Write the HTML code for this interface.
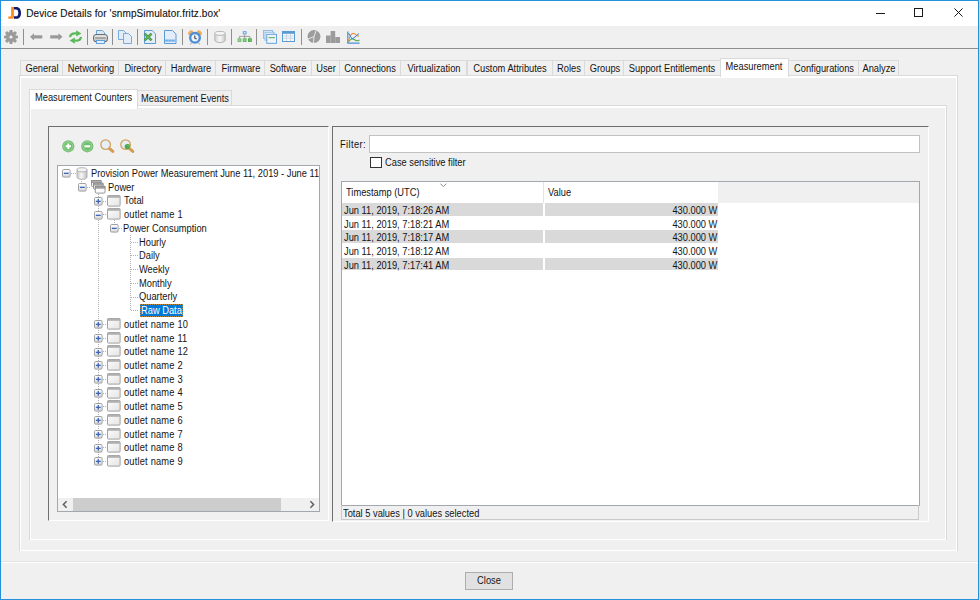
<!DOCTYPE html>
<html><head><meta charset="utf-8">
<style>
*{box-sizing:border-box;margin:0;padding:0}
html,body{width:979px;height:600px;overflow:hidden;background:#f0f0f0}
body{position:relative;font-family:"Liberation Sans",sans-serif;font-size:10px;color:#000}
.a{position:absolute}
svg.a{overflow:visible}
.t{position:absolute;white-space:nowrap;line-height:12px;-webkit-text-stroke:0px currentColor}
.ebox{position:absolute;width:9px;height:9px}
.hd{position:absolute;height:1px;background-image:linear-gradient(90deg,#b0b0b0 50%,transparent 50%);background-size:2px 1px}
.vd{position:absolute;width:1px;background-image:linear-gradient(#b0b0b0 50%,transparent 50%);background-size:1px 2px}
</style></head><body>

<div class="a" style="left:0.00px;top:0.00px;width:979.00px;height:600.00px;border:1px solid #2490dc;background:#f0f0f0"></div>
<div class="a" style="left:1.00px;top:1.00px;width:977.00px;height:25.40px;background:#fff"></div>
<svg class="a" style="left:7px;top:6px" width="15" height="14" viewBox="0 0 15 14"><path d="M4.1 1H6.9V10.2C6.9 11.9 6 12.8 4.2 12.8H1.3V10.4H3.2C3.8 10.4 4.1 10.1 4.1 9.5Z" fill="#ff8a1e"/><path d="M6.9 1H9.2C12.4 1 14 3.2 14 6.9S12.4 12.8 9.2 12.8H6.9V10.3H8.9C10.5 10.3 11.3 9.2 11.3 6.9S10.5 3.5 8.9 3.5H6.9Z" fill="#0d1b6e"/></svg>
<div class="t" style="left:26.20px;top:8.14px;font-size:10px;transform:scaleX(1.0);transform-origin:0 0;color:#111;letter-spacing:0.12px;-webkit-text-stroke:0.12px #111">Device Details for 'snmpSimulator.fritz.box'</div>
<div class="a" style="left:876.20px;top:13.00px;width:9.00px;height:1.00px;background:#1a1a1a"></div>
<div class="a" style="left:914.40px;top:8.30px;width:9.00px;height:9.00px;border:1px solid #1a1a1a"></div>
<svg class="a" style="left:954.2px;top:8.4px" width="9" height="9" viewBox="0 0 9 9"><path d="M0.4 0.4L8.6 8.6M8.6 0.4L0.4 8.6" stroke="#1a1a1a" stroke-width="1"/></svg>
<div class="a" style="left:1.00px;top:48.00px;width:977.00px;height:1.20px;background:#8d8d8d"></div>
<div class="a" style="left:22.80px;top:29.00px;width:1.10px;height:16.30px;background:#8f8f8f"></div>
<div class="a" style="left:87.30px;top:29.00px;width:1.10px;height:16.30px;background:#8f8f8f"></div>
<div class="a" style="left:112.00px;top:29.00px;width:1.10px;height:16.30px;background:#8f8f8f"></div>
<div class="a" style="left:136.90px;top:29.00px;width:1.10px;height:16.30px;background:#8f8f8f"></div>
<div class="a" style="left:181.80px;top:29.00px;width:1.10px;height:16.30px;background:#8f8f8f"></div>
<div class="a" style="left:206.50px;top:29.00px;width:1.10px;height:16.30px;background:#8f8f8f"></div>
<div class="a" style="left:231.30px;top:29.00px;width:1.10px;height:16.30px;background:#8f8f8f"></div>
<div class="a" style="left:256.00px;top:29.00px;width:1.10px;height:16.30px;background:#8f8f8f"></div>
<div class="a" style="left:300.80px;top:29.00px;width:1.10px;height:16.30px;background:#8f8f8f"></div>
<!-- gear -->
<svg class="a" style="left:4px;top:30px" width="14" height="14" viewBox="0 0 14 14"><g fill="#9a9a9a" transform="translate(7 7)"><circle r="5"/><rect x="-1.6" y="-7" width="3.2" height="3" rx=".8" transform="rotate(0)"/><rect x="-1.6" y="-7" width="3.2" height="3" rx=".8" transform="rotate(45)"/><rect x="-1.6" y="-7" width="3.2" height="3" rx=".8" transform="rotate(90)"/><rect x="-1.6" y="-7" width="3.2" height="3" rx=".8" transform="rotate(135)"/><rect x="-1.6" y="-7" width="3.2" height="3" rx=".8" transform="rotate(180)"/><rect x="-1.6" y="-7" width="3.2" height="3" rx=".8" transform="rotate(225)"/><rect x="-1.6" y="-7" width="3.2" height="3" rx=".8" transform="rotate(270)"/><rect x="-1.6" y="-7" width="3.2" height="3" rx=".8" transform="rotate(315)"/></g><circle cx="7" cy="7" r="1.6" fill="#f0f0f0"/></svg>
<!-- left arrow -->
<svg class="a" style="left:30px;top:33px" width="13" height="8" viewBox="0 0 13 8"><path d="M0 3.8L4 0.3V2.3H12.3V5.4H4V7.4Z" fill="#9a9a9a"/></svg>
<!-- right arrow -->
<svg class="a" style="left:49.5px;top:33px" width="13" height="8" viewBox="0 0 13 8"><path d="M12.5 3.8L8.5 0.3V2.3H0.2V5.4H8.5V7.4Z" fill="#9a9a9a"/></svg>
<!-- refresh -->
<svg class="a" style="left:68px;top:30px" width="15" height="14" viewBox="0 0 15 14"><g fill="none" stroke="#5cb85c" stroke-width="2.3"><path d="M2 7.2C2.3 4.5 4.5 3 8.6 3.4"/><path d="M13 6.8C12.7 9.5 10.5 11 6.4 10.6"/></g><path d="M8.2 0.3L13.4 3.6L8.2 6.6Z" fill="#5cb85c"/><path d="M6.8 7.4L1.6 10.4L6.8 13.7Z" fill="#5cb85c"/></svg>
<!-- printer -->
<svg class="a" style="left:93px;top:30px" width="15" height="14" viewBox="0 0 15 14"><defs><linearGradient id="prg" x1="0" y1="0" x2="0" y2="1"><stop offset="0" stop-color="#f2f2f2"/><stop offset="1" stop-color="#bdbdbd"/></linearGradient></defs><path d="M3.5 0.5H9.3L11.5 2.7V5.5H3.5Z" fill="#dce9f8" stroke="#5b9bd5" stroke-width=".9"/><rect x="0.6" y="4.6" width="13.8" height="7.2" rx="2.4" fill="url(#prg)" stroke="#5f5f5f" stroke-width="1"/><rect x="2.2" y="7.2" width="10.6" height="1.6" fill="#9a9a9a"/><rect x="3.5" y="10.5" width="8" height="3" fill="#e4eefa" stroke="#5b9bd5" stroke-width=".9"/></svg>
<!-- copy -->
<svg class="a" style="left:118px;top:30px" width="15" height="14" viewBox="0 0 15 14"><path d="M0.5 0.5H5.5L8 3V9.5H0.5Z" fill="#e2edf9" stroke="#6aa2dc" stroke-width=".9"/><path d="M5.5 3.5H10.5L13.5 6.5V13.5H5.5Z" fill="#e2edf9" stroke="#6aa2dc" stroke-width=".9"/></svg>
<!-- excel -->
<svg class="a" style="left:143px;top:30px" width="14" height="14" viewBox="0 0 14 14"><path d="M1.5 0.5H9.2L12.5 3.8V13.5H1.5Z" fill="#e4eefa" stroke="#5b9bd5" stroke-width="1"/><path d="M1.6 3.6L8.6 10.4M8.6 3.6L1.6 10.4" stroke="#4a9a40" stroke-width="2.6"/><path d="M2 4L8.2 10M8.2 4L2 10" stroke="#7cc06a" stroke-width=".8"/></svg>
<!-- doc -->
<svg class="a" style="left:163.5px;top:30px" width="14" height="14" viewBox="0 0 14 14"><path d="M0.5 0.5H8.4L12 4.1V13.5H0.5Z" fill="#e4eefa" stroke="#5b9bd5" stroke-width="1"/><rect x="1" y="9.4" width="10.5" height="2.4" fill="#86bff0"/><path d="M2.5 10.6H3.5M5.5 10.6H6.5M8.5 10.6H9.5" stroke="#5b9bd5" stroke-width="1"/></svg>
<!-- alarm clock -->
<svg class="a" style="left:187.5px;top:29.5px" width="14" height="15" viewBox="0 0 14 15"><ellipse cx="2.6" cy="2.8" rx="2.9" ry="2" transform="rotate(-42 2.6 2.8)" fill="#efab5a"/><ellipse cx="11.4" cy="2.8" rx="2.9" ry="2" transform="rotate(42 11.4 2.8)" fill="#efab5a"/><circle cx="7" cy="7.8" r="6" fill="#4a8fd6"/><circle cx="7" cy="7.8" r="3.6" fill="#eef4fb"/><path d="M6.8 5.6V8.2L8.6 9" fill="none" stroke="#3c3c3c" stroke-width="1.1"/><path d="M3.4 13L2.4 14.4M10.6 13L11.6 14.4" stroke="#9a9a9a" stroke-width="1"/></svg>
<!-- db -->
<svg class="a" style="left:213.8px;top:31px" width="12" height="12" viewBox="0 0 12 12"><defs><linearGradient id="tdb" x1="0" x2="1"><stop offset="0" stop-color="#cfcfcf"/><stop offset=".5" stop-color="#f8f8f8"/><stop offset="1" stop-color="#c8c8c8"/></linearGradient></defs><path d="M0.8 2.4V9.2C0.8 10.5 3.1 11.5 6 11.5S11.2 10.5 11.2 9.2V2.4" fill="url(#tdb)" stroke="#b0b0b0" stroke-width=".9"/><ellipse cx="6" cy="2.4" rx="5.2" ry="2" fill="#f4f4f4" stroke="#b0b0b0" stroke-width=".9"/></svg>
<!-- network -->
<svg class="a" style="left:236.5px;top:31px" width="15" height="12" viewBox="0 0 15 12"><rect x="5.8" y="0.2" width="3.8" height="3.2" fill="#5aa2ea"/><rect x="6.8" y="1" width="1.8" height="1.6" fill="#cfe4fa"/><path d="M7.7 3.4V5.4M2.4 5.4H12.9M2.4 5.4V7.3M7.7 5.4V7.3M12.9 5.4V7.3" stroke="#8a8a8a" stroke-width=".8" fill="none"/><rect x="0.6" y="7.3" width="3.8" height="3.6" fill="#6cbc6c"/><rect x="5.8" y="7.3" width="3.8" height="3.6" fill="#5cb25c"/><rect x="11" y="7.3" width="3.8" height="3.6" fill="#4aa54a"/><rect x="1.6" y="8.3" width="1.8" height="1.6" fill="#a4d8a4"/><rect x="6.8" y="8.3" width="1.8" height="1.6" fill="#94cf94"/><rect x="12" y="8.3" width="1.8" height="1.6" fill="#84c584"/></svg>
<!-- stack windows -->
<svg class="a" style="left:262.8px;top:30.3px" width="14" height="14" viewBox="0 0 14 14"><rect x="0.5" y="0.5" width="9" height="8" fill="#e8f0fa" stroke="#8db8e6" stroke-width=".9"/><rect x="2" y="2.2" width="9" height="8" fill="#e8f0fa" stroke="#8db8e6" stroke-width=".9"/><rect x="3.8" y="4.3" width="9.7" height="9" fill="#eef4fb" stroke="#5b9bd5" stroke-width=".9"/><rect x="5.5" y="7" width="6.5" height="1.2" fill="#67b867"/></svg>
<!-- table -->
<svg class="a" style="left:282px;top:31px" width="13" height="11" viewBox="0 0 13 11"><rect x="0.5" y="0.5" width="12" height="10" fill="#f4f7fb" stroke="#5b9bd5" stroke-width="1"/><rect x="0.5" y="0.5" width="12" height="2.3" fill="#5b9bd5"/><path d="M1.5 5H11.5M1.5 7.3H11.5M4.5 3V10M8.5 3V10" stroke="#c8d4e2" stroke-width=".9"/></svg>
<!-- pie -->
<svg class="a" style="left:306.5px;top:30px" width="14" height="13" viewBox="0 0 14 13"><circle cx="7" cy="6.5" r="6.5" fill="#9c9c9c"/><path d="M7 6.5L9.2 0.4M7 6.5L0.8 9.2M7 6.5L6.5 13" stroke="#f0f0f0" stroke-width=".9"/></svg>
<!-- bars -->
<svg class="a" style="left:326.3px;top:31px" width="14" height="12" viewBox="0 0 14 12"><rect x="0" y="4.5" width="4.6" height="7.5" fill="#9c9c9c"/><rect x="4.6" y="0" width="4.6" height="12" fill="#9c9c9c"/><rect x="9.2" y="6" width="4.8" height="6" fill="#9c9c9c"/></svg>
<!-- line chart -->
<svg class="a" style="left:347px;top:30.5px" width="13" height="13" viewBox="0 0 13 13"><path d="M0.8 0.5V12.2H12.6" fill="none" stroke="#4a8fd8" stroke-width="1.2"/><path d="M1.5 10C3 4 5 2 7 2.5S10 6 12 5" fill="none" stroke="#f0913a" stroke-width="1.1"/><path d="M1.5 11C4 7 6 7.5 8 9S11 10 12.5 9" fill="none" stroke="#5aac4a" stroke-width="1.1"/><path d="M1.5 2L5 8L8 6L12 2.5" fill="none" stroke="#3a7fd0" stroke-width="1"/></svg>

<div class="a" style="left:20.10px;top:60.20px;width:42.60px;height:15.50px;border:1px solid #dadada;border-bottom:none;background:#f0f0f0"></div>
<div class="t" style="left:-158.30px;width:400px;text-align:center;top:63.03px;font-size:10.0px;transform:scaleX(0.93);transform-origin:50% 0;color:#141414;">General</div>
<div class="a" style="left:61.70px;top:60.20px;width:57.60px;height:15.50px;border:1px solid #dadada;border-bottom:none;background:#f0f0f0"></div>
<div class="t" style="left:-109.20px;width:400px;text-align:center;top:63.03px;font-size:10.0px;transform:scaleX(0.93);transform-origin:50% 0;color:#141414;">Networking</div>
<div class="a" style="left:118.30px;top:60.20px;width:47.90px;height:15.50px;border:1px solid #dadada;border-bottom:none;background:#f0f0f0"></div>
<div class="t" style="left:-57.45px;width:400px;text-align:center;top:63.03px;font-size:10.0px;transform:scaleX(0.93);transform-origin:50% 0;color:#141414;">Directory</div>
<div class="a" style="left:165.20px;top:60.20px;width:51.00px;height:15.50px;border:1px solid #dadada;border-bottom:none;background:#f0f0f0"></div>
<div class="t" style="left:-9.00px;width:400px;text-align:center;top:63.03px;font-size:10.0px;transform:scaleX(0.93);transform-origin:50% 0;color:#141414;">Hardware</div>
<div class="a" style="left:215.20px;top:60.20px;width:50.10px;height:15.50px;border:1px solid #dadada;border-bottom:none;background:#f0f0f0"></div>
<div class="t" style="left:40.55px;width:400px;text-align:center;top:63.03px;font-size:10.0px;transform:scaleX(0.93);transform-origin:50% 0;color:#141414;">Firmware</div>
<div class="a" style="left:264.30px;top:60.20px;width:47.50px;height:15.50px;border:1px solid #dadada;border-bottom:none;background:#f0f0f0"></div>
<div class="t" style="left:88.35px;width:400px;text-align:center;top:63.03px;font-size:10.0px;transform:scaleX(0.93);transform-origin:50% 0;color:#141414;">Software</div>
<div class="a" style="left:310.80px;top:60.20px;width:29.10px;height:15.50px;border:1px solid #dadada;border-bottom:none;background:#f0f0f0"></div>
<div class="t" style="left:125.65px;width:400px;text-align:center;top:63.03px;font-size:10.0px;transform:scaleX(0.93);transform-origin:50% 0;color:#141414;">User</div>
<div class="a" style="left:338.90px;top:60.20px;width:62.30px;height:15.50px;border:1px solid #dadada;border-bottom:none;background:#f0f0f0"></div>
<div class="t" style="left:170.35px;width:400px;text-align:center;top:63.03px;font-size:10.0px;transform:scaleX(0.93);transform-origin:50% 0;color:#141414;">Connections</div>
<div class="a" style="left:400.20px;top:60.20px;width:67.30px;height:15.50px;border:1px solid #dadada;border-bottom:none;background:#f0f0f0"></div>
<div class="t" style="left:234.15px;width:400px;text-align:center;top:63.03px;font-size:10.0px;transform:scaleX(0.93);transform-origin:50% 0;color:#141414;">Virtualization</div>
<div class="a" style="left:466.50px;top:60.20px;width:86.80px;height:15.50px;border:1px solid #dadada;border-bottom:none;background:#f0f0f0"></div>
<div class="t" style="left:310.20px;width:400px;text-align:center;top:63.03px;font-size:10.0px;transform:scaleX(0.93);transform-origin:50% 0;color:#141414;">Custom Attributes</div>
<div class="a" style="left:552.30px;top:60.20px;width:32.90px;height:15.50px;border:1px solid #dadada;border-bottom:none;background:#f0f0f0"></div>
<div class="t" style="left:369.05px;width:400px;text-align:center;top:63.03px;font-size:10.0px;transform:scaleX(0.93);transform-origin:50% 0;color:#141414;">Roles</div>
<div class="a" style="left:584.20px;top:60.20px;width:40.10px;height:15.50px;border:1px solid #dadada;border-bottom:none;background:#f0f0f0"></div>
<div class="t" style="left:404.55px;width:400px;text-align:center;top:63.03px;font-size:10.0px;transform:scaleX(0.93);transform-origin:50% 0;color:#141414;">Groups</div>
<div class="a" style="left:623.30px;top:60.20px;width:97.60px;height:15.50px;border:1px solid #dadada;border-bottom:none;background:#f0f0f0"></div>
<div class="t" style="left:472.40px;width:400px;text-align:center;top:63.03px;font-size:10.0px;transform:scaleX(0.93);transform-origin:50% 0;color:#141414;">Support Entitlements</div>
<div class="a" style="left:787.80px;top:60.20px;width:71.50px;height:15.50px;border:1px solid #dadada;border-bottom:none;background:#f0f0f0"></div>
<div class="t" style="left:623.85px;width:400px;text-align:center;top:63.03px;font-size:10.0px;transform:scaleX(0.93);transform-origin:50% 0;color:#141414;">Configurations</div>
<div class="a" style="left:858.30px;top:60.20px;width:40.60px;height:15.50px;border:1px solid #dadada;border-bottom:none;background:#f0f0f0"></div>
<div class="t" style="left:678.90px;width:400px;text-align:center;top:63.03px;font-size:10.0px;transform:scaleX(0.93);transform-origin:50% 0;color:#141414;">Analyze</div>
<div class="a" style="left:19.30px;top:75.20px;width:939.00px;height:476.30px;border:1px solid #dadada"></div>
<div class="a" style="left:20.30px;top:76.00px;width:937.00px;height:474.50px;border:1px solid #fff;border-top-width:2px"></div>
<div class="a" style="left:720.10px;top:58.40px;width:68.70px;height:18.80px;border:1px solid #dadada;border-bottom:none;background:#fff"></div>
<div class="t" style="left:554.20px;width:400px;text-align:center;top:60.93px;font-size:10.0px;transform:scaleX(0.93);transform-origin:50% 0;color:#141414;">Measurement</div>
<div class="a" style="left:137.00px;top:90.00px;width:94.80px;height:15.60px;border:1px solid #dadada;border-bottom:none;background:#f0f0f0"></div>
<div class="t" style="left:-14.80px;width:400px;text-align:center;top:92.73px;font-size:10.0px;transform:scaleX(0.93);transform-origin:50% 0;color:#141414;">Measurement Events</div>
<div class="a" style="left:29.00px;top:105.00px;width:918.00px;height:435.40px;border:1px solid #dadada"></div>
<div class="a" style="left:30.00px;top:106.30px;width:916.00px;height:433.60px;border:1px solid #fff;border-top-width:2px"></div>
<div class="a" style="left:29.00px;top:88.60px;width:108.80px;height:20.00px;border:1px solid #dadada;border-bottom:none;background:#fff"></div>
<div class="t" style="left:35.30px;top:91.53px;font-size:10.0px;transform:scaleX(0.93);transform-origin:0 0;color:#141414;">Measurement Counters</div>
<div class="a" style="left:48.20px;top:126.20px;width:281.00px;height:395.30px;border-top:1.3px solid #6e6e6e;border-left:1.3px solid #6e6e6e;border-right:1px solid #fff;border-bottom:1px solid #fff"></div>
<div class="a" style="left:331.90px;top:126.20px;width:597.30px;height:395.60px;border-top:1.3px solid #6e6e6e;border-left:1.3px solid #6e6e6e;border-right:1px solid #fff;border-bottom:1px solid #fff"></div>
<svg class="a" style="left:61.5px;top:139.5px" width="13" height="13" viewBox="0 0 13 13"><circle cx="6.3" cy="6.3" r="6.1" fill="#72bf72"/><circle cx="6.3" cy="6.3" r="4.6" fill="none" stroke="#a6dba6" stroke-width=".7"/><path d="M6.3 3.6V9M3.6 6.3H9" stroke="#fff" stroke-width="2"/></svg>
<svg class="a" style="left:81px;top:139.5px" width="13" height="13" viewBox="0 0 13 13"><circle cx="6.3" cy="6.3" r="6.1" fill="#72bf72"/><circle cx="6.3" cy="6.3" r="4.6" fill="none" stroke="#a6dba6" stroke-width=".7"/><path d="M3.4 6.3H9.2" stroke="#fff" stroke-width="2"/></svg>
<svg class="a" style="left:100px;top:139px" width="15" height="14" viewBox="0 0 15 14"><path d="M8.6 8.8L12.8 12.4" stroke="#d39c4e" stroke-width="3" stroke-linecap="round"/><circle cx="5.6" cy="5.6" r="4.8" fill="#e6eef8" stroke="#d4a35c" stroke-width="1.3"/></svg>
<svg class="a" style="left:119.8px;top:139px" width="15" height="14" viewBox="0 0 15 14"><path d="M8.6 8.8L12.8 12.4" stroke="#d39c4e" stroke-width="3" stroke-linecap="round"/><circle cx="5.6" cy="5.6" r="4.8" fill="#e6eef8" stroke="#d4a35c" stroke-width="1.3"/><circle cx="7.3" cy="7.6" r="2.7" fill="#4ea84e"/><circle cx="8.6" cy="6.6" r="1.5" fill="#5cb85c"/></svg>

<div class="a" style="left:57.40px;top:165.30px;width:262.30px;height:347.00px;border:1px solid #a3a8b0;background:#fff"></div>
<div class="a" style="left:58.4px;top:166.3px;width:260.3px;height:331.7px;overflow:hidden"><div class="a" style="left:-58.4px;top:-166.3px;width:979px;height:600px">
<div class="vd" style="left:81.30px;top:179.00px;height:4.50px"></div>
<div class="vd" style="left:97.50px;top:193.50px;height:268.09px"></div>
<div class="vd" style="left:114.10px;top:219.50px;height:4.96px"></div>
<div class="vd" style="left:130.10px;top:234.96px;height:75.78px"></div>
<div class="hd" style="left:70.50px;top:173.10px;width:5.50px"></div>
<svg class="ebox" style="left:61.50px;top:169.40px" width="9" height="9" viewBox="0 0 9 9"><defs><linearGradient id="eg" x1="0" y1="0" x2="0" y2="1"><stop offset="0" stop-color="#ffffff"/><stop offset="1" stop-color="#d8d8d8"/></linearGradient></defs><rect x="0.5" y="0.5" width="7.6" height="7.6" rx="1.1" fill="url(#eg)" stroke="#a0a0a0" stroke-width="1"/><rect x="1.9" y="3.7" width="4.8" height="1.3" fill="#3d66b8"/></svg>
<svg class="a" style="left:75.6px;top:167.20px" width="12" height="13" viewBox="0 0 12 13"><defs><linearGradient id="dbg" x1="0" x2="1"><stop offset="0" stop-color="#c9c9c9"/><stop offset=".45" stop-color="#f7f7f7"/><stop offset="1" stop-color="#bdbdbd"/></linearGradient></defs><path d="M1 2.8v7.4c0 1.2 2.2 2.1 5 2.1s5-.9 5-2.1V2.8" fill="url(#dbg)" stroke="#acacac" stroke-width=".9"/><ellipse cx="6" cy="2.8" rx="5" ry="2.1" fill="#f2f2f2" stroke="#acacac" stroke-width=".9"/></svg>
<div class="t" style="left:91.30px;top:167.94px;font-size:10.0px;transform:scaleX(0.93);transform-origin:0 0;color:#141414;">Provision Power Measurement June 11, 2019 - June 11, 2019</div>
<div class="hd" style="left:86.50px;top:186.81px;width:4.50px"></div>
<svg class="ebox" style="left:77.80px;top:183.11px" width="9" height="9" viewBox="0 0 9 9"><defs><linearGradient id="eg" x1="0" y1="0" x2="0" y2="1"><stop offset="0" stop-color="#ffffff"/><stop offset="1" stop-color="#d8d8d8"/></linearGradient></defs><rect x="0.5" y="0.5" width="7.6" height="7.6" rx="1.1" fill="url(#eg)" stroke="#a0a0a0" stroke-width="1"/><rect x="1.9" y="3.7" width="4.8" height="1.3" fill="#3d66b8"/></svg>
<svg class="a" style="left:90.6px;top:180.31px" width="15" height="14" viewBox="0 0 15 14"><g stroke="#8d8d8d" stroke-width=".9"><rect x="0.5" y="0.5" width="9.5" height="6" rx="1" fill="#f0f0f0"/><rect x="0.5" y="0.5" width="9.5" height="1.8" fill="#b5b5b5"/><rect x="2.5" y="3.2" width="9.5" height="6" rx="1" fill="#f3f3f3"/><rect x="2.5" y="3.2" width="9.5" height="1.8" fill="#b5b5b5"/><rect x="4.3" y="6.3" width="9.7" height="6.8" rx="1" fill="#fbfbfb"/><rect x="4.3" y="6.3" width="9.7" height="1.8" fill="#aaaaaa"/></g></svg>
<div class="t" style="left:107.50px;top:181.65px;font-size:10.0px;transform:scaleX(0.93);transform-origin:0 0;color:#141414;">Power</div>
<div class="hd" style="left:102.50px;top:200.53px;width:4.50px"></div>
<svg class="ebox" style="left:93.70px;top:196.83px" width="9" height="9" viewBox="0 0 9 9"><defs><linearGradient id="eg" x1="0" y1="0" x2="0" y2="1"><stop offset="0" stop-color="#ffffff"/><stop offset="1" stop-color="#d8d8d8"/></linearGradient></defs><rect x="0.5" y="0.5" width="7.6" height="7.6" rx="1.1" fill="url(#eg)" stroke="#a0a0a0" stroke-width="1"/><rect x="1.9" y="3.7" width="4.8" height="1.3" fill="#3d66b8"/><rect x="3.65" y="1.9" width="1.3" height="4.8" fill="#3d66b8"/></svg>
<svg class="a" style="left:106.60px;top:194.53px" width="14" height="12" viewBox="0 0 14 12"><defs><linearGradient id="wg" x1="0" y1="0" x2="1" y2="1"><stop offset="0" stop-color="#fdfdfd"/><stop offset="1" stop-color="#e4e4e4"/></linearGradient></defs><rect x="0.5" y="0.5" width="12.6" height="10.6" rx="1" fill="url(#wg)" stroke="#a0a0a0"/><rect x="0.5" y="0.5" width="12.6" height="2.3" fill="#b0b0b0"/></svg>
<div class="t" style="left:123.90px;top:195.36px;font-size:10.0px;transform:scaleX(0.93);transform-origin:0 0;color:#141414;">Total</div>
<div class="hd" style="left:102.50px;top:214.24px;width:4.50px"></div>
<svg class="ebox" style="left:93.70px;top:210.54px" width="9" height="9" viewBox="0 0 9 9"><defs><linearGradient id="eg" x1="0" y1="0" x2="0" y2="1"><stop offset="0" stop-color="#ffffff"/><stop offset="1" stop-color="#d8d8d8"/></linearGradient></defs><rect x="0.5" y="0.5" width="7.6" height="7.6" rx="1.1" fill="url(#eg)" stroke="#a0a0a0" stroke-width="1"/><rect x="1.9" y="3.7" width="4.8" height="1.3" fill="#3d66b8"/></svg>
<svg class="a" style="left:106.60px;top:208.24px" width="14" height="12" viewBox="0 0 14 12"><defs><linearGradient id="wg" x1="0" y1="0" x2="1" y2="1"><stop offset="0" stop-color="#fdfdfd"/><stop offset="1" stop-color="#e4e4e4"/></linearGradient></defs><rect x="0.5" y="0.5" width="12.6" height="10.6" rx="1" fill="url(#wg)" stroke="#a0a0a0"/><rect x="0.5" y="0.5" width="12.6" height="2.3" fill="#b0b0b0"/></svg>
<div class="t" style="left:123.90px;top:209.08px;font-size:10.0px;transform:scaleX(0.93);transform-origin:0 0;color:#141414;letter-spacing:0.2px">outlet name 1</div>
<div class="hd" style="left:102.50px;top:323.95px;width:4.50px"></div>
<svg class="ebox" style="left:93.70px;top:320.25px" width="9" height="9" viewBox="0 0 9 9"><defs><linearGradient id="eg" x1="0" y1="0" x2="0" y2="1"><stop offset="0" stop-color="#ffffff"/><stop offset="1" stop-color="#d8d8d8"/></linearGradient></defs><rect x="0.5" y="0.5" width="7.6" height="7.6" rx="1.1" fill="url(#eg)" stroke="#a0a0a0" stroke-width="1"/><rect x="1.9" y="3.7" width="4.8" height="1.3" fill="#3d66b8"/><rect x="3.65" y="1.9" width="1.3" height="4.8" fill="#3d66b8"/></svg>
<svg class="a" style="left:106.60px;top:317.95px" width="14" height="12" viewBox="0 0 14 12"><defs><linearGradient id="wg" x1="0" y1="0" x2="1" y2="1"><stop offset="0" stop-color="#fdfdfd"/><stop offset="1" stop-color="#e4e4e4"/></linearGradient></defs><rect x="0.5" y="0.5" width="12.6" height="10.6" rx="1" fill="url(#wg)" stroke="#a0a0a0"/><rect x="0.5" y="0.5" width="12.6" height="2.3" fill="#b0b0b0"/></svg>
<div class="t" style="left:123.90px;top:318.79px;font-size:10.0px;transform:scaleX(0.93);transform-origin:0 0;color:#141414;letter-spacing:0.2px">outlet name 10</div>
<div class="hd" style="left:102.50px;top:337.67px;width:4.50px"></div>
<svg class="ebox" style="left:93.70px;top:333.97px" width="9" height="9" viewBox="0 0 9 9"><defs><linearGradient id="eg" x1="0" y1="0" x2="0" y2="1"><stop offset="0" stop-color="#ffffff"/><stop offset="1" stop-color="#d8d8d8"/></linearGradient></defs><rect x="0.5" y="0.5" width="7.6" height="7.6" rx="1.1" fill="url(#eg)" stroke="#a0a0a0" stroke-width="1"/><rect x="1.9" y="3.7" width="4.8" height="1.3" fill="#3d66b8"/><rect x="3.65" y="1.9" width="1.3" height="4.8" fill="#3d66b8"/></svg>
<svg class="a" style="left:106.60px;top:331.67px" width="14" height="12" viewBox="0 0 14 12"><defs><linearGradient id="wg" x1="0" y1="0" x2="1" y2="1"><stop offset="0" stop-color="#fdfdfd"/><stop offset="1" stop-color="#e4e4e4"/></linearGradient></defs><rect x="0.5" y="0.5" width="12.6" height="10.6" rx="1" fill="url(#wg)" stroke="#a0a0a0"/><rect x="0.5" y="0.5" width="12.6" height="2.3" fill="#b0b0b0"/></svg>
<div class="t" style="left:123.90px;top:332.50px;font-size:10.0px;transform:scaleX(0.93);transform-origin:0 0;color:#141414;letter-spacing:0.2px">outlet name 11</div>
<div class="hd" style="left:102.50px;top:351.38px;width:4.50px"></div>
<svg class="ebox" style="left:93.70px;top:347.68px" width="9" height="9" viewBox="0 0 9 9"><defs><linearGradient id="eg" x1="0" y1="0" x2="0" y2="1"><stop offset="0" stop-color="#ffffff"/><stop offset="1" stop-color="#d8d8d8"/></linearGradient></defs><rect x="0.5" y="0.5" width="7.6" height="7.6" rx="1.1" fill="url(#eg)" stroke="#a0a0a0" stroke-width="1"/><rect x="1.9" y="3.7" width="4.8" height="1.3" fill="#3d66b8"/><rect x="3.65" y="1.9" width="1.3" height="4.8" fill="#3d66b8"/></svg>
<svg class="a" style="left:106.60px;top:345.38px" width="14" height="12" viewBox="0 0 14 12"><defs><linearGradient id="wg" x1="0" y1="0" x2="1" y2="1"><stop offset="0" stop-color="#fdfdfd"/><stop offset="1" stop-color="#e4e4e4"/></linearGradient></defs><rect x="0.5" y="0.5" width="12.6" height="10.6" rx="1" fill="url(#wg)" stroke="#a0a0a0"/><rect x="0.5" y="0.5" width="12.6" height="2.3" fill="#b0b0b0"/></svg>
<div class="t" style="left:123.90px;top:346.22px;font-size:10.0px;transform:scaleX(0.93);transform-origin:0 0;color:#141414;letter-spacing:0.2px">outlet name 12</div>
<div class="hd" style="left:102.50px;top:365.10px;width:4.50px"></div>
<svg class="ebox" style="left:93.70px;top:361.40px" width="9" height="9" viewBox="0 0 9 9"><defs><linearGradient id="eg" x1="0" y1="0" x2="0" y2="1"><stop offset="0" stop-color="#ffffff"/><stop offset="1" stop-color="#d8d8d8"/></linearGradient></defs><rect x="0.5" y="0.5" width="7.6" height="7.6" rx="1.1" fill="url(#eg)" stroke="#a0a0a0" stroke-width="1"/><rect x="1.9" y="3.7" width="4.8" height="1.3" fill="#3d66b8"/><rect x="3.65" y="1.9" width="1.3" height="4.8" fill="#3d66b8"/></svg>
<svg class="a" style="left:106.60px;top:359.10px" width="14" height="12" viewBox="0 0 14 12"><defs><linearGradient id="wg" x1="0" y1="0" x2="1" y2="1"><stop offset="0" stop-color="#fdfdfd"/><stop offset="1" stop-color="#e4e4e4"/></linearGradient></defs><rect x="0.5" y="0.5" width="12.6" height="10.6" rx="1" fill="url(#wg)" stroke="#a0a0a0"/><rect x="0.5" y="0.5" width="12.6" height="2.3" fill="#b0b0b0"/></svg>
<div class="t" style="left:123.90px;top:359.93px;font-size:10.0px;transform:scaleX(0.93);transform-origin:0 0;color:#141414;letter-spacing:0.2px">outlet name 2</div>
<div class="hd" style="left:102.50px;top:378.81px;width:4.50px"></div>
<svg class="ebox" style="left:93.70px;top:375.11px" width="9" height="9" viewBox="0 0 9 9"><defs><linearGradient id="eg" x1="0" y1="0" x2="0" y2="1"><stop offset="0" stop-color="#ffffff"/><stop offset="1" stop-color="#d8d8d8"/></linearGradient></defs><rect x="0.5" y="0.5" width="7.6" height="7.6" rx="1.1" fill="url(#eg)" stroke="#a0a0a0" stroke-width="1"/><rect x="1.9" y="3.7" width="4.8" height="1.3" fill="#3d66b8"/><rect x="3.65" y="1.9" width="1.3" height="4.8" fill="#3d66b8"/></svg>
<svg class="a" style="left:106.60px;top:372.81px" width="14" height="12" viewBox="0 0 14 12"><defs><linearGradient id="wg" x1="0" y1="0" x2="1" y2="1"><stop offset="0" stop-color="#fdfdfd"/><stop offset="1" stop-color="#e4e4e4"/></linearGradient></defs><rect x="0.5" y="0.5" width="12.6" height="10.6" rx="1" fill="url(#wg)" stroke="#a0a0a0"/><rect x="0.5" y="0.5" width="12.6" height="2.3" fill="#b0b0b0"/></svg>
<div class="t" style="left:123.90px;top:373.65px;font-size:10.0px;transform:scaleX(0.93);transform-origin:0 0;color:#141414;letter-spacing:0.2px">outlet name 3</div>
<div class="hd" style="left:102.50px;top:392.52px;width:4.50px"></div>
<svg class="ebox" style="left:93.70px;top:388.82px" width="9" height="9" viewBox="0 0 9 9"><defs><linearGradient id="eg" x1="0" y1="0" x2="0" y2="1"><stop offset="0" stop-color="#ffffff"/><stop offset="1" stop-color="#d8d8d8"/></linearGradient></defs><rect x="0.5" y="0.5" width="7.6" height="7.6" rx="1.1" fill="url(#eg)" stroke="#a0a0a0" stroke-width="1"/><rect x="1.9" y="3.7" width="4.8" height="1.3" fill="#3d66b8"/><rect x="3.65" y="1.9" width="1.3" height="4.8" fill="#3d66b8"/></svg>
<svg class="a" style="left:106.60px;top:386.52px" width="14" height="12" viewBox="0 0 14 12"><defs><linearGradient id="wg" x1="0" y1="0" x2="1" y2="1"><stop offset="0" stop-color="#fdfdfd"/><stop offset="1" stop-color="#e4e4e4"/></linearGradient></defs><rect x="0.5" y="0.5" width="12.6" height="10.6" rx="1" fill="url(#wg)" stroke="#a0a0a0"/><rect x="0.5" y="0.5" width="12.6" height="2.3" fill="#b0b0b0"/></svg>
<div class="t" style="left:123.90px;top:387.36px;font-size:10.0px;transform:scaleX(0.93);transform-origin:0 0;color:#141414;letter-spacing:0.2px">outlet name 4</div>
<div class="hd" style="left:102.50px;top:406.24px;width:4.50px"></div>
<svg class="ebox" style="left:93.70px;top:402.54px" width="9" height="9" viewBox="0 0 9 9"><defs><linearGradient id="eg" x1="0" y1="0" x2="0" y2="1"><stop offset="0" stop-color="#ffffff"/><stop offset="1" stop-color="#d8d8d8"/></linearGradient></defs><rect x="0.5" y="0.5" width="7.6" height="7.6" rx="1.1" fill="url(#eg)" stroke="#a0a0a0" stroke-width="1"/><rect x="1.9" y="3.7" width="4.8" height="1.3" fill="#3d66b8"/><rect x="3.65" y="1.9" width="1.3" height="4.8" fill="#3d66b8"/></svg>
<svg class="a" style="left:106.60px;top:400.24px" width="14" height="12" viewBox="0 0 14 12"><defs><linearGradient id="wg" x1="0" y1="0" x2="1" y2="1"><stop offset="0" stop-color="#fdfdfd"/><stop offset="1" stop-color="#e4e4e4"/></linearGradient></defs><rect x="0.5" y="0.5" width="12.6" height="10.6" rx="1" fill="url(#wg)" stroke="#a0a0a0"/><rect x="0.5" y="0.5" width="12.6" height="2.3" fill="#b0b0b0"/></svg>
<div class="t" style="left:123.90px;top:401.07px;font-size:10.0px;transform:scaleX(0.93);transform-origin:0 0;color:#141414;letter-spacing:0.2px">outlet name 5</div>
<div class="hd" style="left:102.50px;top:419.95px;width:4.50px"></div>
<svg class="ebox" style="left:93.70px;top:416.25px" width="9" height="9" viewBox="0 0 9 9"><defs><linearGradient id="eg" x1="0" y1="0" x2="0" y2="1"><stop offset="0" stop-color="#ffffff"/><stop offset="1" stop-color="#d8d8d8"/></linearGradient></defs><rect x="0.5" y="0.5" width="7.6" height="7.6" rx="1.1" fill="url(#eg)" stroke="#a0a0a0" stroke-width="1"/><rect x="1.9" y="3.7" width="4.8" height="1.3" fill="#3d66b8"/><rect x="3.65" y="1.9" width="1.3" height="4.8" fill="#3d66b8"/></svg>
<svg class="a" style="left:106.60px;top:413.95px" width="14" height="12" viewBox="0 0 14 12"><defs><linearGradient id="wg" x1="0" y1="0" x2="1" y2="1"><stop offset="0" stop-color="#fdfdfd"/><stop offset="1" stop-color="#e4e4e4"/></linearGradient></defs><rect x="0.5" y="0.5" width="12.6" height="10.6" rx="1" fill="url(#wg)" stroke="#a0a0a0"/><rect x="0.5" y="0.5" width="12.6" height="2.3" fill="#b0b0b0"/></svg>
<div class="t" style="left:123.90px;top:414.79px;font-size:10.0px;transform:scaleX(0.93);transform-origin:0 0;color:#141414;letter-spacing:0.2px">outlet name 6</div>
<div class="hd" style="left:102.50px;top:433.67px;width:4.50px"></div>
<svg class="ebox" style="left:93.70px;top:429.97px" width="9" height="9" viewBox="0 0 9 9"><defs><linearGradient id="eg" x1="0" y1="0" x2="0" y2="1"><stop offset="0" stop-color="#ffffff"/><stop offset="1" stop-color="#d8d8d8"/></linearGradient></defs><rect x="0.5" y="0.5" width="7.6" height="7.6" rx="1.1" fill="url(#eg)" stroke="#a0a0a0" stroke-width="1"/><rect x="1.9" y="3.7" width="4.8" height="1.3" fill="#3d66b8"/><rect x="3.65" y="1.9" width="1.3" height="4.8" fill="#3d66b8"/></svg>
<svg class="a" style="left:106.60px;top:427.67px" width="14" height="12" viewBox="0 0 14 12"><defs><linearGradient id="wg" x1="0" y1="0" x2="1" y2="1"><stop offset="0" stop-color="#fdfdfd"/><stop offset="1" stop-color="#e4e4e4"/></linearGradient></defs><rect x="0.5" y="0.5" width="12.6" height="10.6" rx="1" fill="url(#wg)" stroke="#a0a0a0"/><rect x="0.5" y="0.5" width="12.6" height="2.3" fill="#b0b0b0"/></svg>
<div class="t" style="left:123.90px;top:428.50px;font-size:10.0px;transform:scaleX(0.93);transform-origin:0 0;color:#141414;letter-spacing:0.2px">outlet name 7</div>
<div class="hd" style="left:102.50px;top:447.38px;width:4.50px"></div>
<svg class="ebox" style="left:93.70px;top:443.68px" width="9" height="9" viewBox="0 0 9 9"><defs><linearGradient id="eg" x1="0" y1="0" x2="0" y2="1"><stop offset="0" stop-color="#ffffff"/><stop offset="1" stop-color="#d8d8d8"/></linearGradient></defs><rect x="0.5" y="0.5" width="7.6" height="7.6" rx="1.1" fill="url(#eg)" stroke="#a0a0a0" stroke-width="1"/><rect x="1.9" y="3.7" width="4.8" height="1.3" fill="#3d66b8"/><rect x="3.65" y="1.9" width="1.3" height="4.8" fill="#3d66b8"/></svg>
<svg class="a" style="left:106.60px;top:441.38px" width="14" height="12" viewBox="0 0 14 12"><defs><linearGradient id="wg" x1="0" y1="0" x2="1" y2="1"><stop offset="0" stop-color="#fdfdfd"/><stop offset="1" stop-color="#e4e4e4"/></linearGradient></defs><rect x="0.5" y="0.5" width="12.6" height="10.6" rx="1" fill="url(#wg)" stroke="#a0a0a0"/><rect x="0.5" y="0.5" width="12.6" height="2.3" fill="#b0b0b0"/></svg>
<div class="t" style="left:123.90px;top:442.22px;font-size:10.0px;transform:scaleX(0.93);transform-origin:0 0;color:#141414;letter-spacing:0.2px">outlet name 8</div>
<div class="hd" style="left:102.50px;top:461.09px;width:4.50px"></div>
<svg class="ebox" style="left:93.70px;top:457.39px" width="9" height="9" viewBox="0 0 9 9"><defs><linearGradient id="eg" x1="0" y1="0" x2="0" y2="1"><stop offset="0" stop-color="#ffffff"/><stop offset="1" stop-color="#d8d8d8"/></linearGradient></defs><rect x="0.5" y="0.5" width="7.6" height="7.6" rx="1.1" fill="url(#eg)" stroke="#a0a0a0" stroke-width="1"/><rect x="1.9" y="3.7" width="4.8" height="1.3" fill="#3d66b8"/><rect x="3.65" y="1.9" width="1.3" height="4.8" fill="#3d66b8"/></svg>
<svg class="a" style="left:106.60px;top:455.09px" width="14" height="12" viewBox="0 0 14 12"><defs><linearGradient id="wg" x1="0" y1="0" x2="1" y2="1"><stop offset="0" stop-color="#fdfdfd"/><stop offset="1" stop-color="#e4e4e4"/></linearGradient></defs><rect x="0.5" y="0.5" width="12.6" height="10.6" rx="1" fill="url(#wg)" stroke="#a0a0a0"/><rect x="0.5" y="0.5" width="12.6" height="2.3" fill="#b0b0b0"/></svg>
<div class="t" style="left:123.90px;top:455.93px;font-size:10.0px;transform:scaleX(0.93);transform-origin:0 0;color:#141414;letter-spacing:0.2px">outlet name 9</div>
<div class="hd" style="left:119.00px;top:227.96px;width:4.00px"></div>
<svg class="ebox" style="left:110.30px;top:224.26px" width="9" height="9" viewBox="0 0 9 9"><defs><linearGradient id="eg" x1="0" y1="0" x2="0" y2="1"><stop offset="0" stop-color="#ffffff"/><stop offset="1" stop-color="#d8d8d8"/></linearGradient></defs><rect x="0.5" y="0.5" width="7.6" height="7.6" rx="1.1" fill="url(#eg)" stroke="#a0a0a0" stroke-width="1"/><rect x="1.9" y="3.7" width="4.8" height="1.3" fill="#3d66b8"/></svg>
<div class="t" style="left:122.90px;top:222.79px;font-size:10.0px;transform:scaleX(0.93);transform-origin:0 0;color:#141414;">Power Consumption</div>
<div class="hd" style="left:131.00px;top:241.67px;width:7.50px"></div>
<div class="t" style="left:139.40px;top:236.51px;font-size:10.0px;transform:scaleX(0.93);transform-origin:0 0;color:#141414;">Hourly</div>
<div class="hd" style="left:131.00px;top:255.38px;width:7.50px"></div>
<div class="t" style="left:139.40px;top:250.22px;font-size:10.0px;transform:scaleX(0.93);transform-origin:0 0;color:#141414;">Daily</div>
<div class="hd" style="left:131.00px;top:269.10px;width:7.50px"></div>
<div class="t" style="left:139.40px;top:263.93px;font-size:10.0px;transform:scaleX(0.93);transform-origin:0 0;color:#141414;">Weekly</div>
<div class="hd" style="left:131.00px;top:282.81px;width:7.50px"></div>
<div class="t" style="left:139.40px;top:277.65px;font-size:10.0px;transform:scaleX(0.93);transform-origin:0 0;color:#141414;">Monthly</div>
<div class="hd" style="left:131.00px;top:296.53px;width:7.50px"></div>
<div class="t" style="left:139.40px;top:291.36px;font-size:10.0px;transform:scaleX(0.93);transform-origin:0 0;color:#141414;">Quarterly</div>
<div class="hd" style="left:131.00px;top:310.24px;width:7.50px"></div>
<div class="a" style="left:140.00px;top:304.14px;width:42.60px;height:13.00px;background:#0078d7;outline:1px dotted #b8863b;outline-offset:-1px"></div>
<div class="t" style="left:140.80px;top:305.08px;font-size:10.0px;transform:scaleX(0.93);transform-origin:0 0;color:#fff;">Raw Data</div>
</div></div>
<div class="a" style="left:58.40px;top:498.00px;width:260.30px;height:13.00px;background:#f0f0f0"></div>
<div class="a" style="left:73.00px;top:498.00px;width:208.00px;height:13.00px;background:#cdcdcd"></div>
<svg class="a" style="left:61px;top:500px" width="8" height="9" viewBox="0 0 8 9"><path d="M5.6 1.2L2.4 4.5L5.6 7.8" fill="none" stroke="#606060" stroke-width="1.5"/></svg>
<svg class="a" style="left:308px;top:500px" width="8" height="9" viewBox="0 0 8 9"><path d="M2.4 1.2L5.6 4.5L2.4 7.8" fill="none" stroke="#606060" stroke-width="1.5"/></svg>
<div class="t" style="left:340.30px;top:138.84px;font-size:10.0px;transform:scaleX(0.93);transform-origin:0 0;color:#141414;letter-spacing:0.4px">Filter:</div>
<div class="a" style="left:368.70px;top:135.30px;width:551.30px;height:17.30px;border:1px solid #c2c2c2;background:#fff"></div>
<div class="a" style="left:370.30px;top:157.00px;width:11.70px;height:11.00px;border:1px solid #333;background:#fff"></div>
<div class="t" style="left:385.20px;top:157.14px;font-size:10.0px;transform:scaleX(0.93);transform-origin:0 0;color:#141414;">Case sensitive filter</div>
<div class="a" style="left:341.40px;top:181.10px;width:578.80px;height:324.60px;border:1px solid #a3a8b0;background:#fff"></div>
<div class="a" style="left:342.40px;top:182.10px;width:375.60px;height:20.60px;background:#fff"></div>
<div class="a" style="left:718.00px;top:182.10px;width:201.20px;height:20.60px;background:#f0f0f0"></div>
<div class="a" style="left:543.30px;top:182.10px;width:1.00px;height:20.60px;background:#e3e3e3"></div>
<div class="t" style="left:346.00px;top:187.03px;font-size:10.0px;transform:scaleX(0.93);transform-origin:0 0;color:#141414;">Timestamp (UTC)</div>
<div class="t" style="left:548.20px;top:187.03px;font-size:10.0px;transform:scaleX(0.93);transform-origin:0 0;color:#141414;">Value</div>
<svg class="a" style="left:439.8px;top:182.8px" width="7" height="5" viewBox="0 0 7 5"><path d="M0.5 0.7L3.4 3.7L6.3 0.7" fill="none" stroke="#8c8c8c" stroke-width="1"/></svg>
<div class="a" style="left:342.40px;top:202.70px;width:201.10px;height:12.90px;background:#d9d9d9"></div>
<div class="a" style="left:544.90px;top:202.70px;width:173.10px;height:12.90px;background:#d9d9d9"></div>
<div class="t" style="left:343.60px;top:204.94px;font-size:10.0px;transform:scaleX(0.93);transform-origin:0 0;color:#141414;">Jun 11, 2019, 7:18:26 AM</div>
<div class="t" style="right:261.40px;top:204.94px;font-size:10.0px;transform:scaleX(0.93);transform-origin:100% 0;color:#141414;">430.000 W</div>
<div class="t" style="left:343.60px;top:218.65px;font-size:10.0px;transform:scaleX(0.93);transform-origin:0 0;color:#141414;">Jun 11, 2019, 7:18:21 AM</div>
<div class="t" style="right:261.40px;top:218.65px;font-size:10.0px;transform:scaleX(0.93);transform-origin:100% 0;color:#141414;">430.000 W</div>
<div class="a" style="left:342.40px;top:230.13px;width:201.10px;height:12.90px;background:#d9d9d9"></div>
<div class="a" style="left:544.90px;top:230.13px;width:173.10px;height:12.90px;background:#d9d9d9"></div>
<div class="t" style="left:343.60px;top:232.36px;font-size:10.0px;transform:scaleX(0.93);transform-origin:0 0;color:#141414;">Jun 11, 2019, 7:18:17 AM</div>
<div class="t" style="right:261.40px;top:232.36px;font-size:10.0px;transform:scaleX(0.93);transform-origin:100% 0;color:#141414;">430.000 W</div>
<div class="t" style="left:343.60px;top:246.08px;font-size:10.0px;transform:scaleX(0.93);transform-origin:0 0;color:#141414;">Jun 11, 2019, 7:18:12 AM</div>
<div class="t" style="right:261.40px;top:246.08px;font-size:10.0px;transform:scaleX(0.93);transform-origin:100% 0;color:#141414;">430.000 W</div>
<div class="a" style="left:342.40px;top:257.56px;width:201.10px;height:12.90px;background:#d9d9d9"></div>
<div class="a" style="left:544.90px;top:257.56px;width:173.10px;height:12.90px;background:#d9d9d9"></div>
<div class="t" style="left:343.60px;top:259.79px;font-size:10.0px;transform:scaleX(0.93);transform-origin:0 0;color:#141414;">Jun 11, 2019, 7:17:41 AM</div>
<div class="t" style="right:261.40px;top:259.79px;font-size:10.0px;transform:scaleX(0.93);transform-origin:100% 0;color:#141414;">430.000 W</div>
<div class="a" style="left:341.40px;top:505.40px;width:577.60px;height:14.20px;border-left:1px solid #c9c9c9;border-bottom:1px solid #c9c9c9;border-right:1px solid #c9c9c9"></div>
<div class="t" style="left:343.20px;top:508.13px;font-size:10.0px;transform:scaleX(0.93);transform-origin:0 0;color:#141414;">Total 5 values | 0 values selected</div>
<div class="a" style="left:1.00px;top:561.00px;width:977.00px;height:1.00px;background:#e3e3e3"></div>
<div class="a" style="left:1.00px;top:562.00px;width:977.00px;height:1.00px;background:#fff"></div>
<div class="a" style="left:464.90px;top:572.00px;width:48.60px;height:17.60px;border:1px solid #adadad;background:#e1e1e1"></div>
<div class="t" style="left:289.00px;width:400px;text-align:center;top:574.73px;font-size:10.0px;transform:scaleX(0.93);transform-origin:50% 0;color:#141414;">Close</div>
</body></html>
